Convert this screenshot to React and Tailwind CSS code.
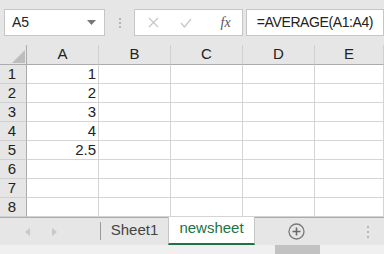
import React from 'react';

const cols = ['A', 'B', 'C', 'D', 'E'];
const data = { 1: '1', 2: '2', 3: '3', 4: '4', 5: '2.5' };

const App = () => {
    return (
        <div className="w-[384px] h-[254px] overflow-hidden bg-[#e6e6e6] flex flex-col font-['Liberation_Sans',Arial,sans-serif] text-[#222]">
            {/* formula bar */}
            <div className="h-[45px] shrink-0 flex items-start pt-[9px] pl-[4px]">
                <div className="w-[102px] h-[27px] bg-white border border-[#c6c6c6] flex items-center justify-between pl-[7px] pr-[8px]">
                    <span className="text-[14px] text-[#222]">A5</span>
                    <svg width="9" height="5" viewBox="0 0 9 5"><path d="M0 0h9L4.5 5z" fill="#777" /></svg>
                </div>
                <div className="w-[30px] h-[27px] flex flex-col items-center justify-center gap-[2px]">
                    <span className="w-[2px] h-[2px] bg-[#b5b5b5]" />
                    <span className="w-[2px] h-[2px] bg-[#b5b5b5]" />
                    <span className="w-[2px] h-[2px] bg-[#b5b5b5]" />
                </div>
                <div className="w-[110px] h-[27px] bg-white border border-[#c6c6c6] flex items-center">
                    <div className="w-[36px] flex justify-center">
                        <svg width="11" height="11" viewBox="0 0 11 11"><path d="M1 1l9 9M10 1l-9 9" stroke="#c8c8c8" strokeWidth="1.3" /></svg>
                    </div>
                    <div className="w-[30px] flex justify-center">
                        <svg width="12" height="10" viewBox="0 0 12 10"><path d="M1 5l3.5 4L11 1" stroke="#c8c8c8" strokeWidth="1.3" fill="none" /></svg>
                    </div>
                    <div className="flex-1 flex justify-center pl-[8px]">
                        <span className="font-['Liberation_Serif',serif] italic text-[14px] text-[#555]">fx</span>
                    </div>
                </div>
                <div className="ml-[3px] w-[140px] h-[27px] bg-white border border-[#c6c6c6] flex items-center pl-[10px]">
                    <span className="text-[14px] tracking-[-0.4px] text-[#222] whitespace-nowrap">=AVERAGE(A1:A4)</span>
                </div>
            </div>

            {/* grid */}
            <div className="grid grid-cols-[27px_72px_72px_72px_72px_1fr] grid-rows-[20px_repeat(8,19px)] bg-white">
                <div className="bg-[#e6e6e6] border-r border-b border-[#ababab] flex items-end justify-end pr-[1px] pb-[1px]">
                    <svg width="13" height="13" viewBox="0 0 13 13"><path d="M13 0v13H0z" fill="#bdbdbd" /></svg>
                </div>
                {cols.map((c) => (
                    <div key={c} className="bg-[#e6e6e6] border-r border-[#d0d0d0] border-b border-b-[#ababab] flex items-center justify-center text-[15px] text-[#222]">
                        {c}
                    </div>
                ))}
                {[1, 2, 3, 4, 5, 6, 7, 8].map((r) => (
                    <React.Fragment key={r}>
                        <div className="bg-[#e6e6e6] border-r border-[#ababab] border-b border-b-[#d0d0d0] flex items-center justify-center pr-[2px] text-[15px] text-[#222]">
                            {r}
                        </div>
                        {cols.map((c) => (
                            <div key={c} className="border-r border-b border-[#d4d4d4] flex items-center justify-end pr-[2px] text-[15px] text-[#222]">
                                {c === 'A' ? data[r] : ''}
                            </div>
                        ))}
                    </React.Fragment>
                ))}
            </div>

            {/* sheet tabs */}
            <div className="h-[28px] shrink-0 flex items-stretch">
                <div className="w-[100px] border-t border-[#ababab] flex items-center pl-[25px] gap-[22px]">
                    <svg width="5" height="8" viewBox="0 0 5 8"><path d="M5 0v8L0 4z" fill="#c8c8c8" /></svg>
                    <svg width="5" height="8" viewBox="0 0 5 8"><path d="M0 0v8l5-4z" fill="#c8c8c8" /></svg>
                </div>
                <div className="w-[68px] border-t border-[#ababab] flex items-center">
                    <div className="h-[18px] border-l border-[#9a9a9a] flex-1 flex items-center justify-center text-[15px] text-[#444] mb-[2px]">
                        Sheet1
                    </div>
                </div>
                <div className="w-[87px] bg-white border-l border-r border-[#c6c6c6] border-b-2 border-b-[#217346] flex items-center justify-center text-[15px] text-[#217346] pb-[3px]">
                    newsheet
                </div>
                <div className="flex-1 border-t border-[#ababab] flex items-center">
                    <div className="w-[82px] flex justify-center">
                        <svg width="17" height="17" viewBox="0 0 17 17">
                            <circle cx="8.5" cy="8.5" r="7.5" fill="none" stroke="#7a7a7a" strokeWidth="1.3" />
                            <path d="M8.5 4.5v8M4.5 8.5h8" stroke="#6a6a6a" strokeWidth="1.6" />
                        </svg>
                    </div>
                    <div className="flex-1 flex flex-col items-end pr-[15px] gap-[3px]">
                        <span className="w-[2px] h-[2px] bg-[#b5b5b5]" />
                        <span className="w-[2px] h-[2px] bg-[#b5b5b5]" />
                        <span className="w-[2px] h-[2px] bg-[#b5b5b5]" />
                    </div>
                </div>
            </div>
            <div className="flex-1 bg-[#f0f0f0] flex">
                <div className="ml-[275px] w-[45px] bg-[#c2c2c2]" />
            </div>
        </div>
    );
};

export default App;
